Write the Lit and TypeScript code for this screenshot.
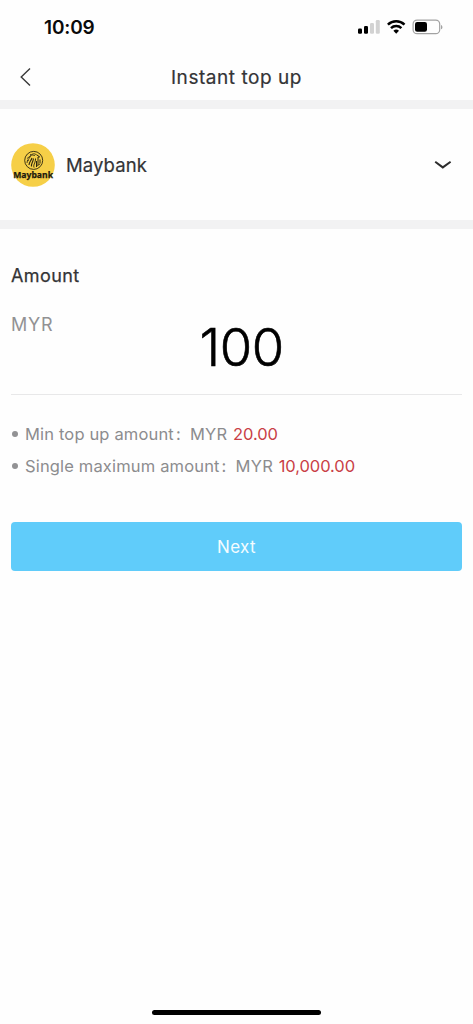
import { LitElement, html, css } from "lit";
import { customElement, property } from "lit/decorators.js";

@customElement("status-bar")
class StatusBar extends LitElement {
  static styles = css`
    :host { display: flex; height: 54px; align-items: center; justify-content: space-between; padding: 0 30px 0 44px; box-sizing: border-box; }
    .time { font-size: 19px; font-weight: 600; line-height: 24px; letter-spacing: -0.15px; color: #0a0a0a; padding-top: 1px; }
    svg { display: block; }
  `;
  render() {
    return html`
      <span class="time">10:09</span>
      <svg width="86" height="20" viewBox="357 17 86 20">
        <rect x="358" y="28.5" width="4" height="5.2" rx="1.2" fill="#000" />
        <rect x="364" y="26" width="4" height="7.7" rx="1.2" fill="#000" />
        <rect x="370" y="23" width="4" height="10.7" rx="1.2" fill="#d2d2d2" />
        <rect x="375.8" y="20" width="4" height="13.7" rx="1.2" fill="#d2d2d2" />
        <g fill="none" stroke="#000" stroke-width="2.5">
          <path d="M387.9 24.7a11.9 11.9 0 0 1 16.6 0" />
          <path d="M391 28.2a7.4 7.4 0 0 1 10.4 0" />
        </g>
        <path d="M393.4 30.8a4.2 4.2 0 0 1 5.6 0l-2.8 3z" fill="#000" />
        <rect x="413.1" y="20.1" width="26.6" height="13.6" rx="4" fill="none" stroke="#a2a2a2" stroke-width="1.2" />
        <rect x="415" y="22" width="12" height="9.8" rx="2.2" fill="#000" />
        <path d="M441 24.9v4.4c1.9-.7 1.9-3.7 0-4.4z" fill="#a2a2a2" />
      </svg>
    `;
  }
}

@customElement("bank-logo")
class BankLogo extends LitElement {
  static styles = css`
    :host { display: block; width: 44px; height: 44px; }
    svg { display: block; }
    .name { font: 700 9.2px "Noto Sans", "Open Sans", sans-serif; }
  `;
  render() {
    return html`
      <svg width="44" height="44" viewBox="0 0 44 44">
        <circle cx="22" cy="22" r="21.8" fill="#f6cf47" />
        <g fill="none" stroke="#2b2511" stroke-width="0.8">
          <circle cx="22.7" cy="17.4" r="9" stroke-width=".9" />
          <path d="M16 20c0-3 2-4 3-6s3-4 5-3 4 2 4 4" />
          <path d="M18 22c0-3 2-4 3-7M20.5 23.5c-.5-3 1.5-4 2-8" stroke-width="1.1" />
          <path d="M23 24.5c-1-3 1.5-4 1.5-9M27 14v8M29 16.5v4M25.5 18v6" stroke-width="1" />
          <path d="M16 15.5l4-3M19 11.5l5 1M26 12l3 2M16 18l2-1M26 23l3-2" />
        </g>
        <text class="name" x="2.2" y="35.2" textLength="39.8" lengthAdjust="spacingAndGlyphs" fill="#1d190c" stroke="#1d190c" stroke-width="0.25">Maybank</text>
      </svg>
    `;
  }
}

@customElement("limit-note")
class LimitNote extends LitElement {
  @property() label = "";
  @property() amount = "";
  static styles = css`
    :host { display: flex; align-items: center; height: 32px; font-size: 16.5px; color: #8c8c8e; white-space: pre; }
    .dot { width: 6px; height: 6px; border-radius: 50%; background: #929294; margin: 0 7px 0 1px; }
    .label { letter-spacing: 0.16px; }
    .colon { width: 14px; padding-left: 2px; }
    .unit { letter-spacing: 0.3px; }
    .value { color: #c93f46; margin-left: 5.5px; letter-spacing: -0.08px; }
  `;
  render() {
    return html`<span class="dot"></span><span class="label">${this.label}</span><span class="colon">:</span><span class="unit">MYR</span><span class="value">${this.amount}</span>`;
  }
}

@customElement("app-root")
class AppRoot extends LitElement {
  static styles = css`
    :host { display: flex; flex-direction: column; height: 1024px; background: #fefefe; color: #343436; font-family: Inter, "Liberation Sans", sans-serif; overflow: hidden; }
    svg { display: block; }
    .nav { height: 46px; display: grid; grid-template-columns: 36px 1fr 36px; align-items: center; }
    .back { margin-left: 19px; }
    .title { text-align: center; font-size: 19px; line-height: 24px; letter-spacing: 0.55px; padding-top: 1px; -webkit-text-stroke: 0.2px currentColor; }
    .band { height: 9px; background: #f2f2f3; flex: none; }
    .bank { height: 111px; display: flex; align-items: center; padding: 0 21px 0 11px; box-sizing: border-box; }
    .bank-name { flex: 1; margin-left: 11px; font-size: 18.5px; letter-spacing: 0.1px; -webkit-text-stroke: 0.2px currentColor; }
    .form { padding: 35px 11px 0; }
    .heading { font-size: 18px; line-height: 24px; letter-spacing: 0.4px; -webkit-text-stroke: 0.25px currentColor; }
    .entry { display: flex; height: 107px; border-bottom: 1px solid #e8e8e9; box-sizing: border-box; }
    .currency { width: 188.5px; padding-top: 25px; font-size: 18px; line-height: 24px; letter-spacing: 0.8px; color: #929294; }
    .amount { padding-top: 27px; font-size: 52.5px; line-height: 64px; font-weight: 300; color: #000; letter-spacing: -0.4px; -webkit-text-stroke: 0.6px #000; }
    .notes { padding-top: 23px; }
    .next { display: block; width: 100%; height: 49px; margin-top: 40px; border: 0; border-radius: 4px; background: #60ccfa; color: #f4fcff; font: 400 17px Inter, sans-serif; letter-spacing: 0.4px; }
    .home { width: 169px; height: 5px; border-radius: 3px; background: #000; margin: auto auto 9px; }
  `;
  render() {
    return html`
      <status-bar></status-bar>
      <div class="nav">
        <svg class="back" width="14" height="20" viewBox="0 0 14 20"><path d="M11 1.5L2.2 10L11 18.5" fill="none" stroke="#3a3a3a" stroke-width="1.4" /></svg>
        <span class="title">Instant top up</span>
      </div>
      <div class="band"></div>
      <div class="bank">
        <bank-logo></bank-logo>
        <span class="bank-name">Maybank</span>
        <svg width="18" height="10" viewBox="0 0 18 10"><path d="M1.2 1.8L8.8 7.4L16.6 1.8" fill="none" stroke="#2c2c2c" stroke-width="2" /></svg>
      </div>
      <div class="band"></div>
      <div class="form">
        <div class="heading">Amount</div>
        <div class="entry">
          <span class="currency">MYR</span>
          <span class="amount">100</span>
        </div>
        <div class="notes">
          <limit-note label="Min top up amount" amount="20.00"></limit-note>
          <limit-note label="Single maximum amount" amount="10,000.00"></limit-note>
        </div>
        <button class="next">Next</button>
      </div>
      <div class="home"></div>
    `;
  }
}
